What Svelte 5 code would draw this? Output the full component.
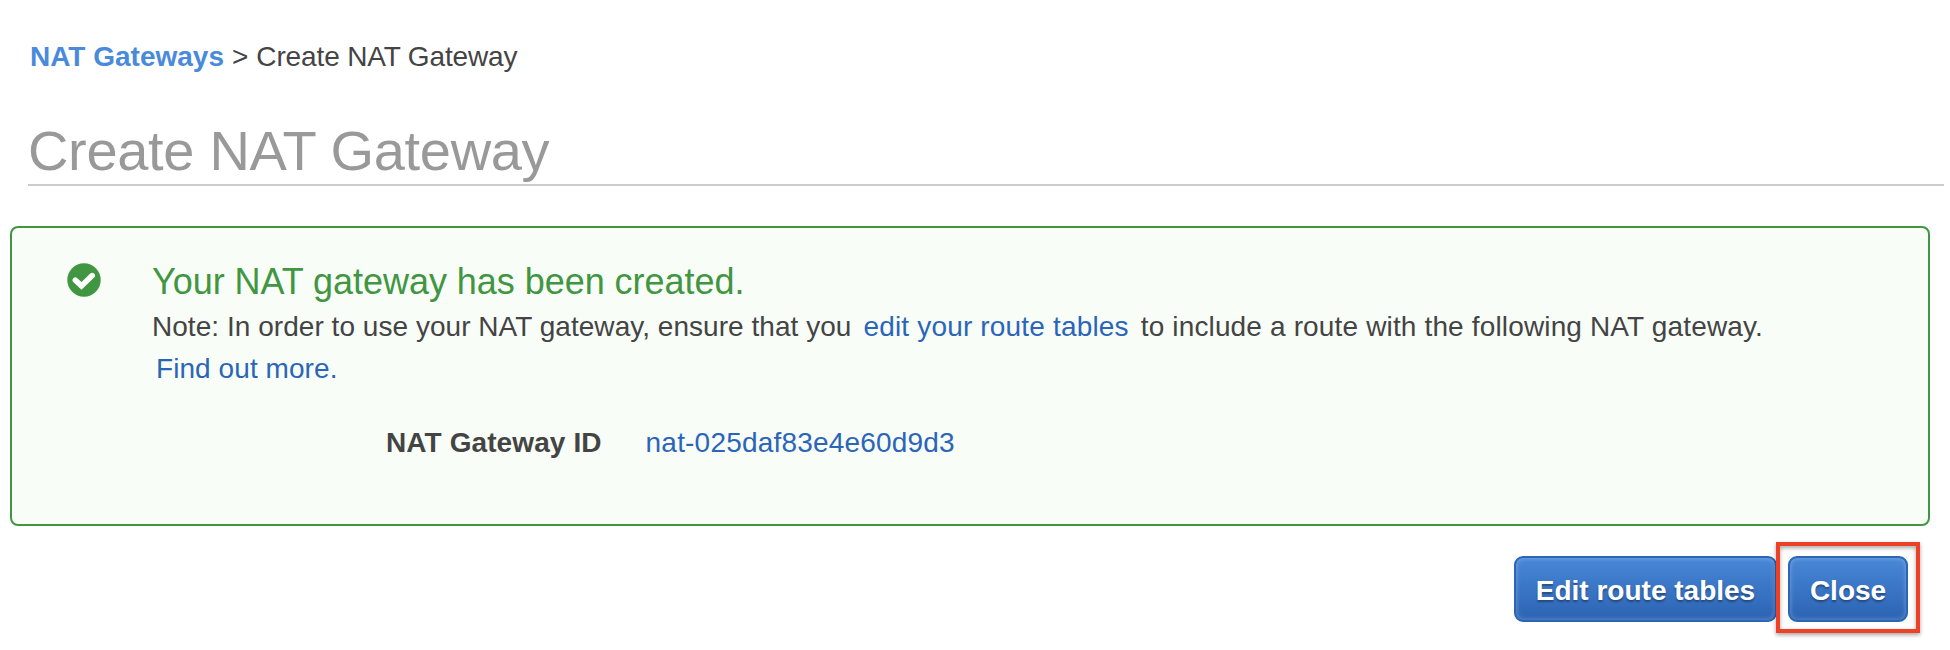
<script>
  const gatewayId = 'nat-025daf83e4e60d9d3';
</script>

<main>
  <nav><a class="crumb" href="#gateways">NAT Gateways</a><span class="sep">&gt;</span><span class="current">Create NAT Gateway</span></nav>
  <h1><span>Create NAT Gateway</span></h1>

  <section class="alert">
    <svg class="check" viewBox="0 0 34 34" aria-hidden="true">
      <circle cx="17" cy="17" r="16.7" fill="#419641" />
      <path d="M8.4 17.2 14.5 22.9 25.2 12.6" fill="none" stroke="#fff" stroke-width="5.6" stroke-linecap="round" stroke-linejoin="miter" />
    </svg>
    <div class="body">
      <h2><span>Your NAT gateway has been created.</span></h2>
      <p><span class="before">Note: In order to use your NAT gateway, ensure that you</span><a class="edit" href="#routes">edit your route tables</a><span class="after">to include a route with the following NAT gateway.</span></p>
      <p><a class="more" href="#more">Find out more.</a></p>
      <dl>
        <dt>NAT Gateway ID</dt>
        <dd><a href="#nat">{gatewayId}</a></dd>
      </dl>
    </div>
  </section>

  <footer>
    <button class="routes"><span>Edit route tables</span></button>
    <div class="highlight"><button class="close"><span>Close</span></button></div>
  </footer>
</main>

<style>
  :global(body) { background: #fff; }
  main {
    box-sizing: border-box;
    width: 1950px;
    height: 650px;
    overflow: hidden;
    padding-top: 36px;
    font-family: "Liberation Sans", Arial, sans-serif;
    font-size: 28px;
    line-height: 42px;
    color: #444;
    white-space: nowrap;
  }
  a { color: #2b65b8; text-decoration: none; }
  nav { display: flex; margin-left: 30px; height: 42px; }
  .crumb { font-weight: bold; color: #4a8adb; }
  .sep { margin: 0 8px; }
  .current { letter-spacing: -0.14px; }
  h1 {
    margin: 41px 6px 0 28px;
    height: 65px;
    border-bottom: 2px solid #ccc;
    font-size: 56px;
    line-height: 64px;
    font-weight: normal;
    letter-spacing: -0.32px;
    color: #999;
  }
  .alert {
    box-sizing: border-box;
    display: flex;
    margin: 40px 20px 0 10px;
    height: 300px;
    padding: 33px 0 0 55px;
    border: 2px solid #419641;
    border-radius: 8px;
    background: #f8fdf8;
  }
  .check { width: 34px; height: 34px; margin-top: 2px; }
  .body { margin-left: 51px; }
  h2 {
    margin: 0;
    height: 45px;
    font-size: 36px;
    line-height: 42px;
    font-weight: normal;
    letter-spacing: -0.04px;
    color: #419641;
  }
  p { display: flex; margin: 0; height: 42px; }
  .before { letter-spacing: 0.04px; }
  .edit { margin: 0 12px; letter-spacing: 0.17px; }
  .after { letter-spacing: 0.15px; }
  .more { margin-left: 4px; letter-spacing: 0.07px; }
  dl { display: flex; gap: 44px; margin: 32px 0 0 234px; }
  dt { font-weight: bold; letter-spacing: 0.1px; }
  dd { margin: 0; letter-spacing: 0.19px; }
  footer {
    display: flex;
    justify-content: flex-end;
    align-items: flex-start;
    padding: 16px 30px 0 0;
  }
  button {
    box-sizing: border-box;
    display: block;
    height: 66px;
    padding: 3px 0 0;
    border: 2px solid #2b65b5;
    border-radius: 9px;
    background: linear-gradient(#4887d7, #2c63b3);
    box-shadow: inset 0 0 5px rgba(255, 255, 255, 0.32);
    color: #fff;
    font: bold 28px/42px "Liberation Sans", Arial, sans-serif;
    text-shadow: 0 2px 2px rgba(0, 0, 0, 0.35);
    white-space: nowrap;
  }
  .routes { width: 263px; margin: 14px -1px 0 0; }
  .close { width: 120px; }
  .highlight {
    box-sizing: border-box;
    position: relative;
    width: 144px;
    height: 91px;
    padding: 10px 8px;
    border: 4px solid #ee4027;
    box-shadow: 0 2px 4px rgba(0, 0, 0, 0.35), inset 0 2px 4px rgba(0, 0, 0, 0.35);
  }
</style>
